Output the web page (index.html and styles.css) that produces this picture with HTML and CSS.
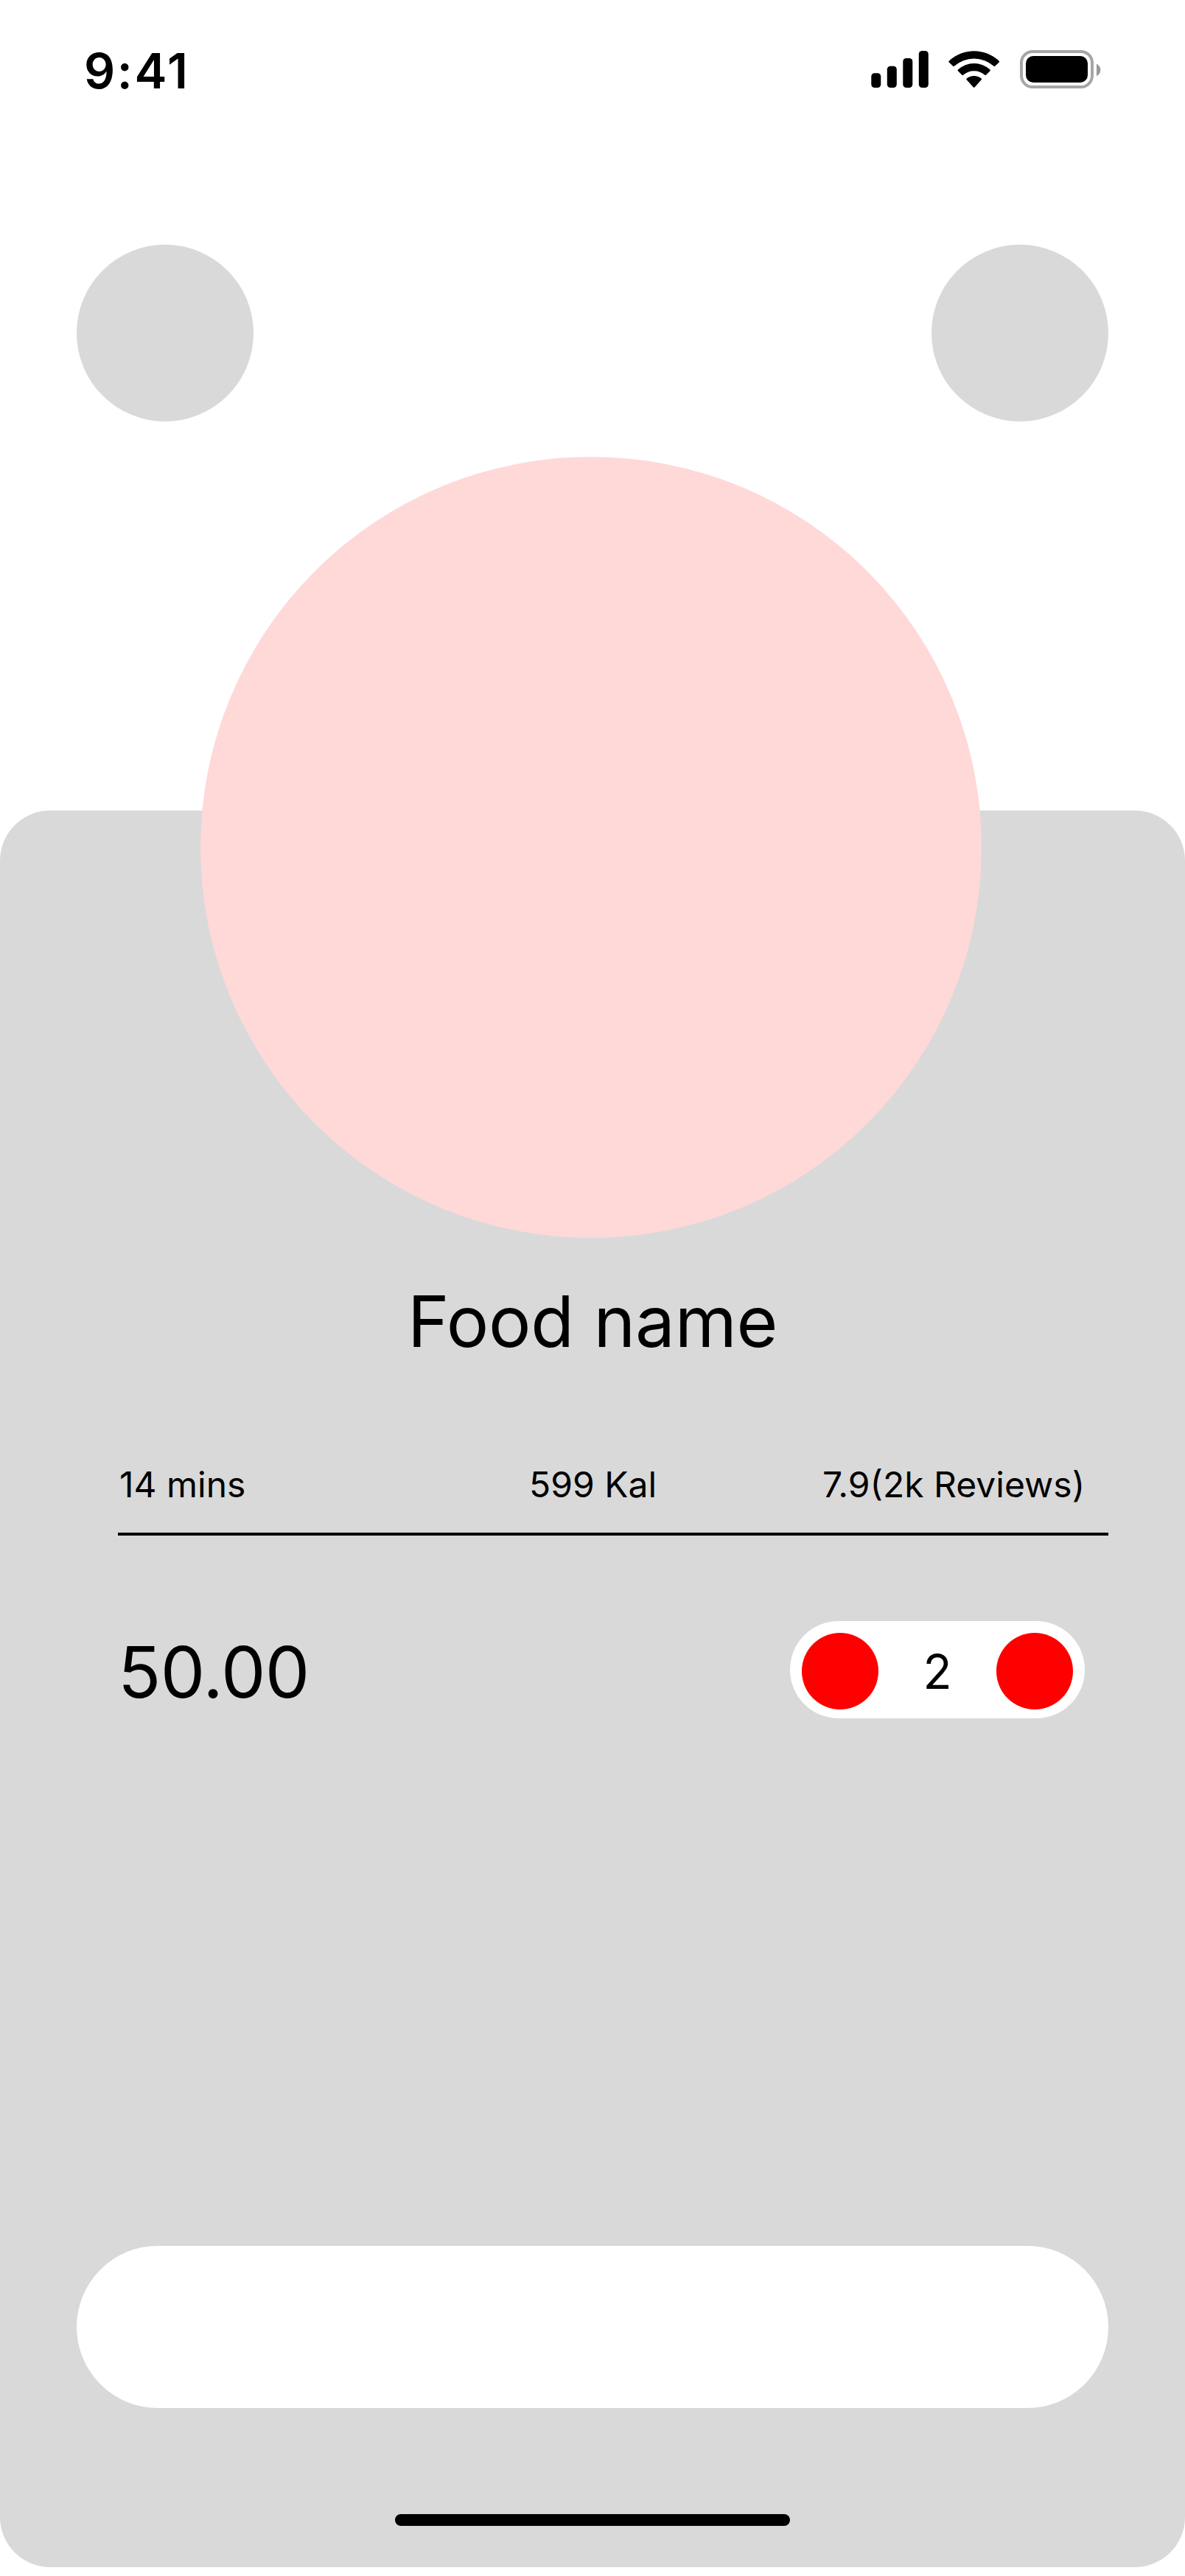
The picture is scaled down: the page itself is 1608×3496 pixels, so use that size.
FILE: index.html
```html
<!DOCTYPE html>
<html lang="en">
<head>
<meta charset="utf-8">
<title>Food details</title>
<link rel="stylesheet" href="styles.css">
</head>
<body>
<main class="screen">
  <header class="status-bar">
    <span class="time">9:41</span>
    <svg class="status-icons" viewBox="0 0 312 52" aria-hidden="true">
      <rect x="0.3" y="31.3" width="13" height="19.7" rx="4.5"/>
      <rect x="21.8" y="21.7" width="13" height="29.3" rx="4.5"/>
      <rect x="43.3" y="11" width="13" height="40" rx="4.5"/>
      <rect x="64.8" y="1" width="13" height="50" rx="4.5"/>
      <path d="M105.7 14.8A49.4 49.4 0 0 1 173.7 14.8Q174.500 15.600 173.700 16.400L168.200 21.800Q167.400 22.500 166.600 21.800A40.500 40.500 0 0 0 112.800 21.800Q112 22.500 111.200 21.800L105.700 16.400Q104.900 15.600 105.7 14.8Z"/>
      <path d="M117.9 26.600A32 32 0 0 1 161.500 26.600Q162.300 27.500 161.500 28.300L156 33.800Q155.200 34.500 154.400 33.800A22 22 0 0 0 125 33.800Q124.200 34.500 123.400 33.800L117.900 28.300Q117.100 27.500 117.9 26.600Z"/>
      <path d="M129.700 38.600A15.500 15.500 0 0 1 149.700 38.600Q150.500 39.400 149.700 40.200L140.500 50.400Q139.700 51.200 138.900 50.400L129.700 40.200Q128.900 39.400 129.700 38.600Z"/>
      <rect class="battery-outline" x="204" y="2" width="96" height="48" rx="15.2"/>
      <rect x="210" y="8" width="84" height="36" rx="10"/>
      <path class="battery-cap" d="M306 18.800V35.200C309.200 33.800 311.300 30.600 311.300 27S309.200 20.200 306 18.800Z"/>
    </svg>
  </header>
  <nav class="top-actions">
    <span class="round-button"></span>
    <span class="round-button"></span>
  </nav>
  <section class="sheet">
    <div class="food-image"></div>
    <h1 class="food-name">Food name</h1>
    <div class="facts">
      <span>14 mins</span>
      <span>599 Kal</span>
      <span>7.9(2k Reviews)</span>
    </div>
    <div class="purchase">
      <span class="price">50.00</span>
      <div class="stepper">
        <span class="step"></span>
        <span class="count">2</span>
        <span class="step"></span>
      </div>
    </div>
    <div class="main-button"></div>
    <div class="home-indicator"></div>
  </section>
</main>
</body>
</html>
```

FILE: styles.css
```css
* {
  box-sizing: border-box;
}

body {
  margin: 0;
  background: #fff;
  color: #000;
  font-family: Inter, "Liberation Sans", sans-serif;
}

.screen {
  width: 1608px;
  height: 3496px;
  display: flex;
  flex-direction: column;
}

.status-bar {
  height: 332px;
  padding: 56px 114px 0 114px;
  display: flex;
  justify-content: space-between;
  align-items: flex-start;
}

.time {
  font-size: 66px;
  font-weight: 600;
  line-height: 80px;
  letter-spacing: 2.6px;
}

.status-icons {
  width: 312px;
  height: 52px;
  margin-top: 12px;
}

.battery-outline {
  fill: none;
  stroke: #a6a6a6;
  stroke-width: 4;
}

.battery-cap {
  fill: #999;
}

.top-actions {
  height: 768px;
  padding: 0 104px;
  display: flex;
  justify-content: space-between;
}

.round-button {
  width: 240px;
  height: 240px;
  border-radius: 50%;
  background: #d9d9d9;
}

.sheet {
  height: 2384px;
  border-radius: 68px;
  background: #d9d9d9;
  display: flex;
  flex-direction: column;
}

.food-image {
  width: 1060px;
  height: 1060px;
  margin: -480px 0 0 272px;
  border-radius: 50%;
  background: #ffd8d8;
}

.food-name {
  margin: 55px 0 0 553px;
  font-size: 96px;
  font-weight: 400;
  line-height: 116px;
  letter-spacing: -0.25px;
  white-space: nowrap;
}

.facts {
  width: 1344px;
  height: 98px;
  margin: 135px 0 0 160px;
  padding-left: 2px;
  border-bottom: 4px solid #000;
  display: grid;
  grid-template-columns: 556px 398px auto;
  font-size: 48px;
  line-height: 58px;
  white-space: nowrap;
}

.purchase {
  height: 132px;
  margin: 116px 136px 0 160px;
  display: flex;
  justify-content: space-between;
}

.price {
  margin-top: 11px;
  font-size: 96px;
  line-height: 116px;
  letter-spacing: -0.6px;
}

.stepper {
  width: 400px;
  height: 132px;
  padding: 16px 16px 12px;
  border-radius: 66px;
  background: #fff;
  display: flex;
  justify-content: space-between;
}

.step {
  width: 104px;
  height: 104px;
  border-radius: 50%;
  background: #f00;
}

.count {
  margin-top: 14px;
  font-size: 64px;
  line-height: 77px;
}

.main-button {
  height: 220px;
  margin: 716px 104px 0;
  border-radius: 110px;
  background: #fff;
}

.home-indicator {
  width: 536px;
  height: 16px;
  margin: 144px auto 0;
  border-radius: 8px;
  background: #000;
}
```
